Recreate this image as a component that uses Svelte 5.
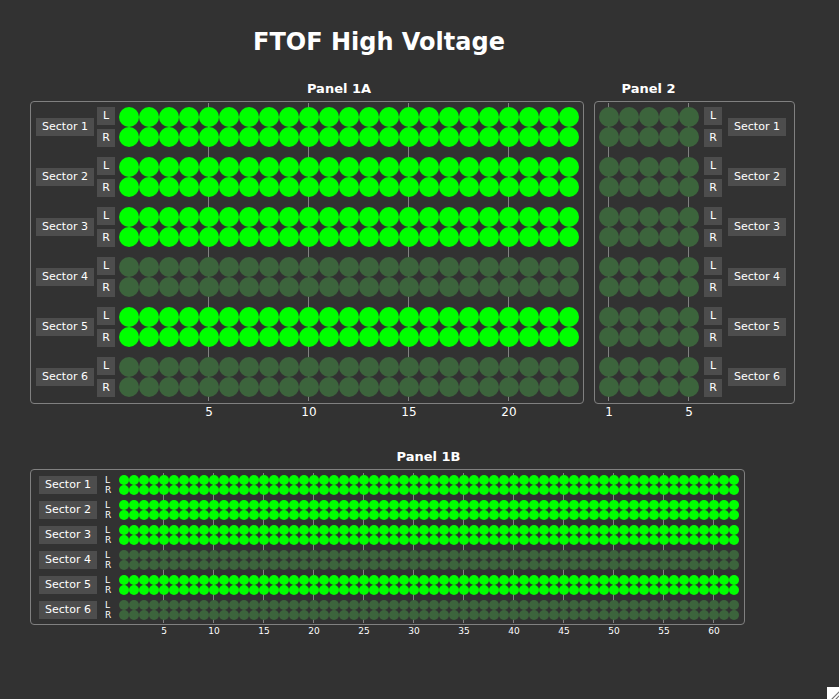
<script>
  const sectors = [
    { id: 1, on: true },
    { id: 2, on: true },
    { id: 3, on: true },
    { id: 4, on: false },
    { id: 5, on: true },
    { id: 6, on: false }
  ];

  const panels = {
    a: { name: 'Panel 1A', kind: 'a', count: 23, ticks: [5, 10, 15, 20] },
    two: { name: 'Panel 2', kind: 'two', count: 5, ticks: [1, 5] },
    b: { name: 'Panel 1B', kind: 'b', count: 62, ticks: [5, 10, 15, 20, 25, 30, 35, 40, 45, 50, 55, 60] }
  };
  const isOn = (p, s) => p.kind !== 'two' && s.on;
</script>

{#snippet panel(p)}
  <section class="panel {p.kind}">
    <h2>{p.name}</h2>
    <div class="frame">
      <div class="sectors">
        {#each sectors as s}
          <div class="slot"><button type="button">Sector {s.id}</button></div>
        {/each}
      </div>
      <div class="sides">
        {#each sectors as s}
          <div class="pair">
            {#if p.kind === 'b'}
              <span>L</span><span>R</span>
            {:else}
              <button type="button">L</button><button type="button">R</button>
            {/if}
          </div>
        {/each}
      </div>
      <div class="channels" style:--count={p.count}>
        {#each p.ticks as t}
          <i class="line" style:--tick={t}></i>
          <span class="tick" style:--tick={t}>{t}</span>
        {/each}
        {#each sectors as s}
          <div class="leds" class:on={isOn(p, s)}>
            {#each { length: p.count * 2 } as _}
              <i class="led"></i>
            {/each}
          </div>
        {/each}
      </div>
    </div>
  </section>
{/snippet}

<main>
  <h1>FTOF High Voltage</h1>
  <div class="top">
    {@render panel(panels.a)}
    {@render panel(panels.two)}
  </div>
  {@render panel(panels.b)}
  <svg class="grip" width="12" height="12" viewBox="0 0 12 12" aria-hidden="true">
    <rect width="12" height="12" fill="#fff" />
    <path d="M4.5 12.5L12.5 4.5M8.5 12.5L12.5 8.5" stroke="#777" stroke-width="1.2" />
  </svg>
</main>

<style>
  :global(body) {
    background: #323232;
  }
  main {
    box-sizing: border-box;
    min-height: 100vh;
    padding: 24px 30px;
    position: relative;
    color: #fff;
    font-family: 'DejaVu Sans', sans-serif;
  }
  h1 {
    width: fit-content;
    margin: 0 0 20px 223px;
    font-size: 24px;
    line-height: 36px;
  }
  h2 {
    margin: 0;
    font-size: 13px;
    line-height: 18px;
    padding-bottom: 3px;
    text-align: center;
  }
  .top {
    display: flex;
    gap: 10px;
    margin-bottom: 44px;
  }
  .panel {
    --cell: 20px;
    --row-gap: 10px;
    width: fit-content;
  }
  .b {
    --cell: 10px;
    --row-gap: 5px;
  }
  .a h2 {
    padding-left: 64px;
  }
  .two h2 {
    padding-right: 92px;
  }
  .b h2 {
    padding-left: 82px;
  }
  .frame {
    display: flex;
    border: 1px solid #808080;
    border-radius: 4px;
    padding: 5px 4px 6px 5px;
  }
  .two .frame {
    flex-direction: row-reverse;
    padding: 5px 8px 6px 4px;
  }
  .b .frame {
    padding: 5px 5px 4px 8px;
  }
  .sectors,
  .sides,
  .channels {
    display: flex;
    flex-direction: column;
    gap: var(--row-gap);
  }
  .slot {
    display: flex;
    align-items: center;
    height: calc(var(--cell) * 2);
  }
  button {
    border: 0;
    padding: 0;
    height: 18px;
    background: #4d4d4d;
    color: #fff;
    font: 11px/18px 'DejaVu Sans', sans-serif;
  }
  .slot button {
    width: 58px;
  }
  .sides {
    margin: 0 4px 0 3px;
  }
  .two .sides {
    margin: 0 6px 0 5px;
  }
  .b .sides {
    margin: 0 8px;
  }
  .pair {
    display: flex;
    flex-direction: column;
    justify-content: space-between;
    height: calc(var(--cell) * 2);
  }
  .pair button {
    width: 18px;
  }
  .pair span {
    width: 6px;
    font-size: 9px;
    line-height: 10px;
  }
  .channels {
    position: relative;
  }
  .leds {
    position: relative;
    display: grid;
    grid-template-columns: repeat(var(--count), var(--cell));
    --led: #3c643c;
  }
  .leds.on {
    --led: #00ff00;
  }
  .led {
    width: var(--cell);
    height: var(--cell);
    border-radius: 50%;
    background: var(--led);
  }
  .line {
    position: absolute;
    top: -4px;
    bottom: -4px;
    left: calc((var(--tick) - 0.5) * var(--cell) - 1px);
    width: 1px;
    background: #808080;
  }
  .b .line {
    top: -2px;
    bottom: -3px;
  }
  .tick {
    position: absolute;
    top: 100%;
    left: calc((var(--tick) - 0.5) * var(--cell) - 15px);
    width: 30px;
    margin-top: 7px;
    text-align: center;
    font-size: 12px;
    line-height: 16px;
  }
  .b .tick {
    margin-top: 5px;
    font-size: 9px;
    line-height: 12px;
  }
  .grip {
    position: absolute;
    right: 0;
    bottom: 0;
  }
</style>
